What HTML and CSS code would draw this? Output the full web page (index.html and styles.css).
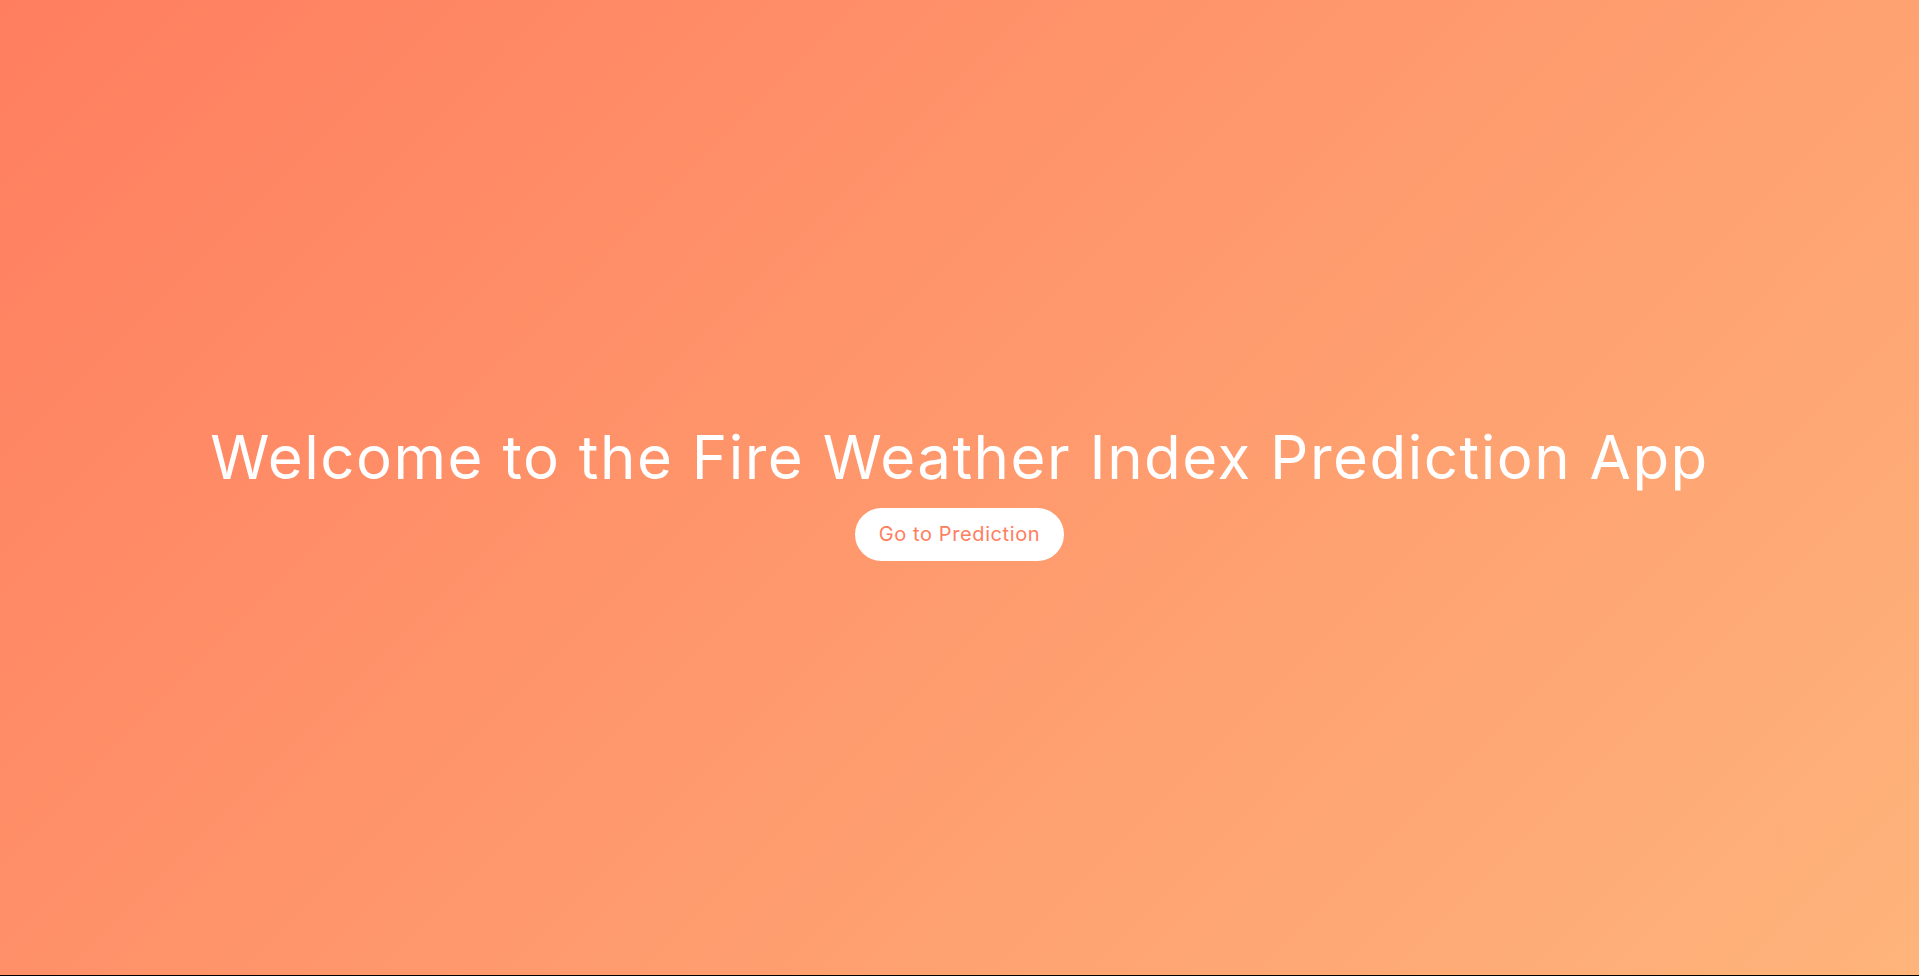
FILE: index.html
```html
<!DOCTYPE html>
<html lang="en">
<head>
<meta charset="utf-8">
<title>Fire Weather Index Prediction</title>
<link rel="stylesheet" href="styles.css">
</head>
<body>
<main class="hero">
  <h1 class="hero-title">Welcome to the Fire Weather Index Prediction App</h1>
  <a class="hero-button" href="#">Go to Prediction</a>
</main>
</body>
</html>
```

FILE: styles.css
```css
html {
  background: #000;
}
body {
  margin: 0;
  font-family: "Inter", "Noto Sans", sans-serif;
}
.hero {
  height: 975px;
  box-sizing: border-box;
  padding-top: 7px;
  background: linear-gradient(135deg, #ff7e5f, #feb47b);
  display: flex;
  flex-direction: column;
  align-items: center;
  justify-content: center;
  color: #fff;
}
.hero-title {
  margin: 0 0 15px;
  font-size: 60px;
  font-weight: 400;
  line-height: 1.2;
  letter-spacing: 1.5px;
}
.hero-button {
  display: inline-block;
  background: #fff;
  color: #ff7e5f;
  text-decoration: none;
  font-size: 20px;
  font-weight: 400;
  letter-spacing: 0.6px;
  padding: 15px 24px;
  border-radius: 27px;
  line-height: 23px;
}
```
